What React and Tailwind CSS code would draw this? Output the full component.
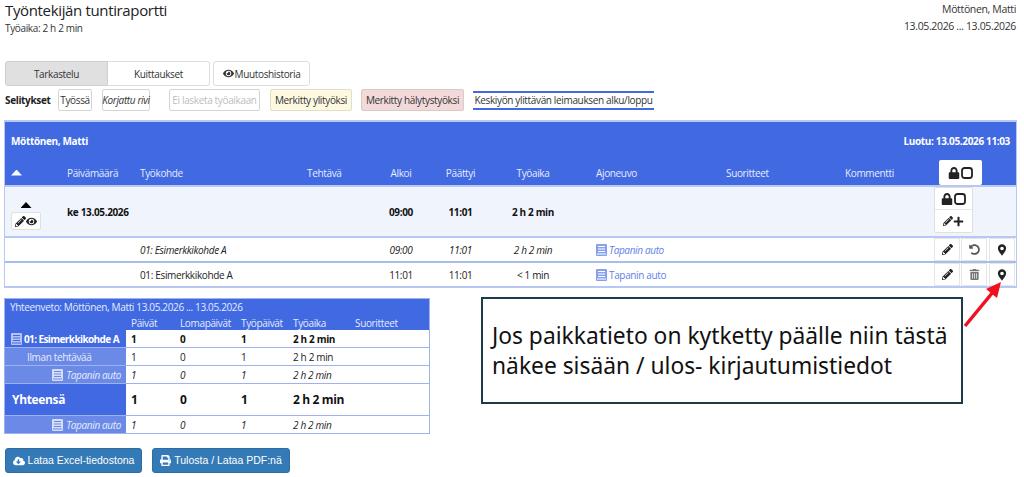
import React from "react";
import { FaEye, FaLock, FaPencilAlt, FaPlus, FaUndoAlt, FaTrashAlt, FaCloudDownloadAlt, FaPrint } from "react-icons/fa";

const Sq = () => (
  <svg viewBox="0 0 12 12" className="w-[12px] h-[12px]"><rect x="1" y="1" width="10" height="10" rx="2.5" fill="none" stroke="#222" strokeWidth="1.8" /></svg>
);
const Pin = () => (
  <svg viewBox="0 0 12 14" className="w-[10px] h-[12px]">
    <path fillRule="evenodd" fill="#222" d="M6 0a5 5 0 0 0-5 5c0 3.4 3.4 6.4 5 9 1.600-2.600 5-5.600 5-9a5 5 0 0 0-5-5zm0 3a2.200 2.200 0 1 1 0 4.400A2.200 2.200 0 0 1 6 3z" />
  </svg>
);
const Up = ({ c = "bg-black" }) => <span className={`inline-block w-[11px] h-[6px] ${c} [clip-path:polygon(50%_0,100%_100%,0_100%)]`} />;
const Book = ({ c = "#86a0ee", line = "#fff" }) => (
  <svg viewBox="0 0 11 12" className="w-[11px] h-[12px] shrink-0">
    <rect x="0" y="0" width="11" height="12" rx="1" fill={c} />
    <rect x="2" y="2" width="7" height="1" fill={line} />
    <rect x="2" y="4.500" width="7" height="1" fill={line} />
    <rect x="2" y="7" width="7" height="1" fill={line} />
    <rect x="1" y="9.500" width="9" height="1" fill={line} />
  </svg>
);
const Legend = ({ className, children }) => (
  <span className={`h-[22px] flex items-center justify-center border rounded-[2px] whitespace-nowrap ${className}`}>{children}</span>
);
const GRID = "grid grid-cols-[62px_73px_167px_64px_60px_59px_86px_150px_119px_89px_82px] items-center whitespace-nowrap";

const Tool = ({ children, className = "" }) => (
  <span className={`flex items-center justify-center w-[26px] h-[23px] bg-white border border-[#e6e6e6] text-[#222] text-[11px] ${className}`}>{children}</span>
);

const Row = ({ italic, values, tools, last }) => (
  <div className={`${GRID} h-[25px] bg-white border-b-2 ${last ? "border-[#b9c8f2]" : "border-[#a9bcf0]"} ${italic ? "italic" : ""} text-[#222]`}>
    <span /><span />
    <span>01: Esimerkkikohde A</span>
    <span />
    <span className="text-center">{values[0]}</span>
    <span className="text-center">{values[1]}</span>
    <span className="text-center">{values[2]}</span>
    <span className="pl-[20px] flex items-center gap-[2px] text-[#5f7fe6]"><Book />Tapanin auto</span>
    <span /><span />
    <span className="flex gap-[1px]">
      <Tool><FaPencilAlt /></Tool>
      <Tool>{tools}</Tool>
      <Tool className="ml-[1px]"><Pin /></Tool>
    </span>
  </div>
);

const SUM = "grid grid-cols-[121px_49px_61px_52px_62px_1fr] items-center whitespace-nowrap";
const SumRow = ({ label, labelClass, className, textClass, v = ["1", "0", "1", "2 h 2 min"] }) => (
  <div className={`${SUM} ${className} border-b border-[#9db2ee]`}>
    <div className={`h-full flex items-center ${labelClass}`}>{label}</div>
    {v.map((x, i) => <span key={i} className={`pl-[5px] ${textClass}`}>{x}</span>)}
    <span />
  </div>
);

export default function App() {
  return (
    <div className="w-[1024px] h-[477px] overflow-hidden bg-white relative font-['Open_Sans',sans-serif] tracking-[-0.035em] text-[10px] text-[#333] leading-none">
      <div className="flex justify-between pl-[5px] pr-[8px] h-[61px]">
        <div className="pt-[1px]">
          <h1 className="text-[15px] leading-[18px] text-[#222]">Työntekijän tuntiraportti</h1>
          <p className="mt-[3px] text-[10px] leading-[12px]">Työaika: 2 h 2 min</p>
        </div>
        <div className="pt-[1px] text-right text-[10.5px] leading-[17px]">
          <p>Möttönen, Matti</p>
          <p>13.05.2026 ... 13.05.2026</p>
        </div>
      </div>

      <div className="flex pl-[5px] h-[25px]">
        <span className="w-[103px] flex items-center justify-center bg-[#e0e0e0] border border-[#cfcfcf] rounded-l-[3px]">Tarkastelu</span>
        <span className="w-[102px] flex items-center justify-center bg-white border border-l-0 border-[#dedede] rounded-r-[3px]">Kuittaukset</span>
        <span className="ml-[3px] w-[97px] flex items-center justify-center gap-[1px] bg-white border border-[#dedede] rounded-[3px]"><FaEye className="text-[11px]" />Muutoshistoria</span>
      </div>

      <div className="flex items-center pl-[5px] h-[22px] mt-[3px]">
        <b className="w-[53px] text-[#222]">Selitykset</b>
        <Legend className="border-[#d5d5d5] bg-white w-[34px]">Työssä</Legend>
        <Legend className="border-[#d5d5d5] bg-white italic ml-[10px] w-[48px]">Korjattu rivi</Legend>
        <Legend className="border-[#d5d5d5] bg-white text-[#bdbdbd] ml-[19px] w-[91px]">Ei lasketa työaikaan</Legend>
        <Legend className="border-[#e2dfc8] bg-[#fdf9e1] ml-[10px] w-[82px]">Merkitty ylityöksi</Legend>
        <Legend className="border-[#dcc8c8] bg-[#f3dada] ml-[9px] w-[103px]">Merkitty hälytystyöksi</Legend>
        <span className="ml-[9px] w-[181px] h-[19px] flex items-center justify-center whitespace-nowrap border-y-2 border-[#4169e1]">Keskiyön ylittävän leimauksen alku/loppu</span>
      </div>

      <div className="mt-[9px] ml-[4px] w-[1013px] border border-[#b9c8f2] border-t-2 border-b-0">
        <div className="bg-[#4169e1] h-[63px] text-[#e6ecfc]">
          <div className="flex justify-between items-center h-[38px] px-[6px] font-bold text-white">
            <span>Möttönen, Matti</span>
            <span>Luotu: 13.05.2026 11:03</span>
          </div>
          <div className={`${GRID} h-[25px]`}>
            <span className="pl-[6px] flex"><Up c="bg-white" /></span>
            <span>Päivämäärä</span>
            <span>Työkohde</span>
            <span>Tehtävä</span>
            <span className="text-center">Alkoi</span>
            <span className="text-center">Päättyi</span>
            <span className="text-center">Työaika</span>
            <span className="pl-[20px]">Ajoneuvo</span>
            <span>Suoritteet</span>
            <span>Kommentti</span>
            <span className="pl-[5px]">
              <span className="flex items-center justify-center gap-[1px] w-[43px] h-[25px] bg-white rounded-[2px] text-[#222] text-[12px]"><FaLock /><Sq /></span>
            </span>
          </div>
        </div>
        <div className={`${GRID} h-[53px] bg-[#f0f4fd] border-y-2 border-[#b9c8f2] font-bold text-[#111]`}>
          <span className="flex flex-col items-center gap-[4px] w-[30px] ml-[6px] mt-[9px]">
            <Up />
            <span className="flex items-center justify-center w-[30px] h-[18px] bg-white border border-[#e0e0e0] rounded-[2px] text-[#222] text-[11px]"><FaPencilAlt /><FaEye /></span>
          </span>
          <span className="col-span-2">ke 13.05.2026</span>
          <span />
          <span className="text-center">09:00</span>
          <span className="text-center">11:01</span>
          <span className="text-center">2 h 2 min</span>
          <span /><span /><span />
          <span className="flex flex-col w-[39px] self-start bg-white border border-[#e0e0e0] rounded-[2px] text-[#222] text-[12px]">
            <span className="h-[22px] flex items-center justify-center gap-[1px] border-b border-[#e6e6e6]"><FaLock /><Sq /></span>
            <span className="h-[22px] flex items-center justify-center"><FaPencilAlt className="text-[10px]" /><FaPlus className="text-[11px]" /></span>
          </span>
        </div>
        <Row italic values={["09:00", "11:01", "2 h 2 min"]} tools={<FaUndoAlt className="text-[#555]" />} />
        <Row values={["11:01", "11:01", "< 1 min"]} tools={<FaTrashAlt className="text-[#777]" />} last />
      </div>

      <div className="flex items-start mt-[10px] ml-[4px]">
        <div className="w-[426px] border border-[#9db2ee]">
          <div className="bg-[#4169e1] text-[#e6ecfc]">
            <div className="h-[16px] flex items-center px-[5px]">Yhteenveto: Möttönen, Matti 13.05.2026 ... 13.05.2026</div>
            <div className={`${SUM} h-[15px]`}>
              <span />
              <span className="pl-[5px]">Päivät</span>
              <span className="pl-[5px]">Lomapäivät</span>
              <span className="pl-[5px]">Työpäivät</span>
              <span className="pl-[5px]">Työaika</span>
              <span className="pl-[5px]">Suoritteet</span>
            </div>
          </div>
          <SumRow className="h-[18px]" textClass="font-bold text-[#111]" labelClass="bg-[#4169e1] text-white font-bold pl-[6px] gap-[2px] tracking-[-0.06em]" label={<><Book c="#b4c4f4" line="#4169e1" />01: Esimerkkikohde A</>} />
          <SumRow className="h-[18px]" textClass="text-[#222]" labelClass="bg-[#6b8ae7] text-[#e6ecfc] pl-[22px]" label="Ilman tehtävää" />
          <SumRow className="h-[18px]" textClass="italic text-[#222]" labelClass="bg-[#6b8ae7] text-[#e6ecfc] italic justify-end pr-[5px] gap-[3px]" label={<><Book c="#d5def8" line="#6b8ae7" />Tapanin auto</>} />
          <SumRow className="h-[32px]" textClass="font-bold text-[12px] text-[#111]" labelClass="bg-[#4169e1] text-white font-bold text-[12px] pl-[7px]" label="Yhteensä" />
          <SumRow className="h-[17px] border-b-0" textClass="italic text-[#222]" labelClass="bg-[#6b8ae7] text-[#e6ecfc] italic justify-end pr-[5px] gap-[3px]" label={<><Book c="#d5def8" line="#6b8ae7" />Tapanin auto</>} />
        </div>
        <div className="ml-[51px] mt-[-1px] w-[482px] h-[107px] border-2 border-[#1d3a47] bg-white flex items-center pl-[9px] font-['Noto_Sans',sans-serif] tracking-normal text-[22.8px] leading-[30px] text-[#111] whitespace-nowrap">
          <p>Jos paikkatieto on kytketty päälle niin tästä<br />näkee sisään / ulos- kirjautumistiedot</p>
        </div>
      </div>

      <div className="flex gap-[10px] ml-[5px] mt-[14px] font-['Liberation_Sans',sans-serif] tracking-normal text-[10.5px] text-white whitespace-nowrap">
        <span className="w-[137px] h-[25px] flex items-center justify-center gap-[3px] bg-[#337ab7] border border-[#2e6da4] rounded-[3px]"><FaCloudDownloadAlt className="text-[12px]" />Lataa Excel-tiedostona</span>
        <span className="w-[138px] h-[25px] flex items-center justify-center gap-[3px] bg-[#337ab7] border border-[#2e6da4] rounded-[3px]"><FaPrint className="text-[11px]" />Tulosta / Lataa PDF:nä</span>
      </div>

      <svg className="absolute left-[962px] top-[280px] w-[42px] h-[50px]" viewBox="0 0 42 50">
        <line x1="3" y1="46" x2="31" y2="12" stroke="#f01020" strokeWidth="3.500" />
        <polygon points="39,2 35,18 24,9" fill="#f01020" />
      </svg>
    </div>
  );
}
